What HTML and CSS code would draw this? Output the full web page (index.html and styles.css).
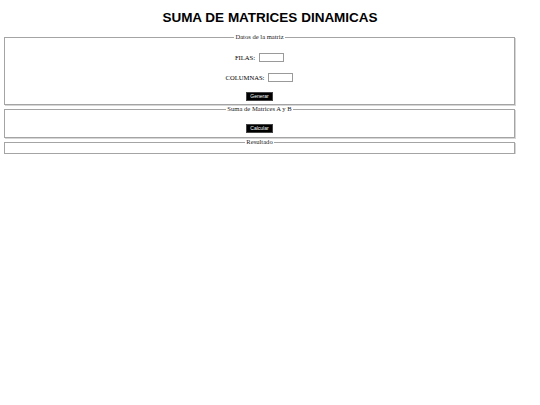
FILE: index.html
```html
<!DOCTYPE html>
<html>
<head>
<meta charset="utf-8">
<link rel="stylesheet" href="styles.css">
</head>
<body>
<div class="page">
  <h1 class="title">SUMA DE MATRICES DINAMICAS</h1>
  <fieldset class="box box-datos">
    <legend class="legend">Datos de la matriz</legend>
    <div class="row row-filas">
      <label class="lbl">FILAS:</label>
      <input class="inp inp-filas" type="text">
    </div>
    <div class="row row-cols">
      <label class="lbl">COLUMNAS:</label>
      <input class="inp inp-cols" type="text">
    </div>
    <div class="row row-btn">
      <button class="btn">Generar</button>
    </div>
  </fieldset>
  <fieldset class="box box-suma">
    <legend class="legend">Suma de Matrices A y B</legend>
    <div class="row row-btn2">
      <button class="btn">Calcular</button>
    </div>
  </fieldset>
  <fieldset class="box box-res">
    <legend class="legend">Resultado</legend>
  </fieldset>
</div>
</body>
</html>
```

FILE: styles.css
```css
html, body {
  margin: 0;
  padding: 0;
  background: #ffffff;
}
.page {
  width: 511px;
  margin-left: 4px;
  font-family: "Liberation Serif", "Times New Roman", serif;
  font-size: 6.6px;
  color: #000;
}
.title {
  font-family: "Liberation Sans", Arial, sans-serif;
  font-weight: bold;
  font-size: 13.5px;
  text-align: center;
  margin: 0;
  padding-top: 10px;
  height: 23px;
  line-height: 15px;
  width: 540px;
  margin-left: -4px;
}
.box {
  margin: 0;
  padding: 0 6px;
  border: 1px solid #a4a4a4;
  box-shadow: 1px 1px 0 #d6d6d6;
  text-align: center;
}
.legend {
  padding: 0 1px;
  font-size: 6.6px;
  line-height: 8px;
  color: #222;
}
.box-datos {
  height: 70px;
}
.box-suma {
  margin-top: 0;
  height: 31px;
}
.box-res {
  margin-top: 0;
  height: 14px;
}
.row {
  display: flex;
  justify-content: center;
  align-items: center;
}
.row-filas {
  margin-top: 12px;
}
.row-cols {
  margin-top: 11px;
}
.row-btn {
  margin-top: 10px;
}
.row-btn2 {
  margin-top: 11px;
}
.lbl {
  margin-right: 4px;
  line-height: 8px;
}
.inp {
  box-sizing: border-box;
  width: 25px;
  height: 9px;
  border: 1px solid #9a9a9a;
  padding: 0;
  margin: 0;
  background: #fff;
}
.btn {
  background: #000;
  color: #fff;
  border: 1px solid #444;
  font-family: "Liberation Sans", Arial, sans-serif;
  font-size: 5px;
  height: 9px;
  line-height: 7px;
  padding: 0 3px;
}
```
